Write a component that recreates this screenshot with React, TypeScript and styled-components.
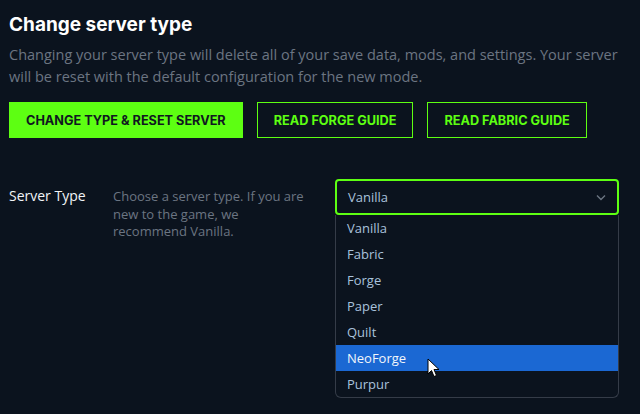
import React from 'react';
import styled, { createGlobalStyle, css } from 'styled-components';

const GlobalStyle = createGlobalStyle`
  html, body {
    margin: 0;
    padding: 0;
    background: #0b131e;
  }

  body {
    font-family: 'Open Sans', 'Liberation Sans', sans-serif;
    overflow: hidden;
  }
`;

const Page = styled.div`
  width: 640px;
  height: 414px;
  padding: 12px 9px 0;
  box-sizing: border-box;
  background: #0b131e;
`;

const Title = styled.h2`
  margin: 0;
  font-family: 'Inter', 'Liberation Sans', sans-serif;
  font-size: 19px;
  font-weight: 700;
  line-height: 26px;
  color: #ffffff;
`;

const Description = styled.p`
  margin: 6px 0 0;
  font-size: 14.5px;
  line-height: 22px;
  color: #6b7582;
`;

const Actions = styled.div`
  display: flex;
  gap: 14px;
  margin-top: 14px;
`;

const Button = styled.button<{ primary?: boolean }>`
  height: 36px;
  padding: 0 16px;
  font-family: 'Inter', 'Liberation Sans', sans-serif;
  font-size: 12.7px;
  font-weight: 700;
  text-transform: uppercase;
  border: 1px solid #5dff12;
  border-radius: 0;
  cursor: pointer;
  color: #5dff12;
  background: transparent;

  ${(props) =>
    props.primary &&
    css`
      color: #101820;
      background: #5dff12;
    `}
`;

const Field = styled.div`
  display: flex;
  align-items: flex-start;
  margin-top: 41px;
`;

const Label = styled.div`
  width: 104px;
  font-size: 14px;
  line-height: 18px;
  padding-top: 8px;
  color: #f1f4f7;
`;

const Hint = styled.div`
  width: 200px;
  font-size: 13px;
  line-height: 17.5px;
  padding-top: 9px;
  color: #6b7582;
`;

const SelectWrap = styled.div`
  position: relative;
  margin-left: 22px;
  width: 284px;
`;

const SelectBox = styled.div`
  display: flex;
  align-items: center;
  justify-content: space-between;
  height: 36px;
  padding: 0 10px 0 11px;
  box-sizing: border-box;
  border: 2px solid #5dff12;
  border-radius: 4px;
  font-size: 13px;
  color: #a9c2dc;
`;

const Chevron = styled.svg`
  width: 12px;
  height: 12px;
  color: #6b7582;
`;

const Menu = styled.ul`
  list-style: none;
  margin: 0;
  padding: 0;
  border: 1px solid #353c48;
  border-top: none;
  border-radius: 0 0 6px 6px;
  overflow: hidden;
`;

const Option = styled.li<{ active?: boolean }>`
  height: 26px;
  line-height: 26px;
  padding-left: 11px;
  font-size: 13px;
  color: #a9c2dc;

  ${(props) =>
    props.active &&
    css`
      color: #f2f6fb;
      background: #1b68d3;
    `}
`;

// mouse pointer hovering the highlighted option
const Cursor = styled.svg`
  position: absolute;
  left: 92px;
  top: 179px;
  width: 13px;
  height: 20px;
`;

const options = ['Vanilla', 'Fabric', 'Forge', 'Paper', 'Quilt', 'NeoForge', 'Purpur'];

export default function App() {
  return (
    <Page>
      <GlobalStyle />
      <Title>Change server type</Title>
      <Description>
        Changing your server type will delete all of your save data, mods, and settings. Your server
        will be reset with the default configuration for the new mode.
      </Description>

      <Actions>
        <Button primary>Change type &amp; reset server</Button>
        <Button>Read Forge guide</Button>
        <Button>Read Fabric guide</Button>
      </Actions>

      <Field>
        <Label>Server Type</Label>
        <Hint>Choose a server type. If you are new to the game, we recommend Vanilla.</Hint>
        <SelectWrap>
          <SelectBox>
            Vanilla
            <Chevron viewBox="0 0 12 12" fill="none" stroke="currentColor" strokeWidth="1.4">
              <path d="M2 4.5l4 4 4-4" />
            </Chevron>
          </SelectBox>
          <Menu>
            {options.map((name) => (
              <Option key={name} active={name === 'NeoForge'}>
                {name}
              </Option>
            ))}
          </Menu>
          <Cursor viewBox="0 0 13 20">
            <path
              d="M1 1 L1 16 L4.5 12.5 L7 18.5 L9.5 17.5 L7 11.5 L12 11.5 Z"
              fill="#ffffff"
              stroke="#000000"
              strokeWidth="1"
            />
          </Cursor>
        </SelectWrap>
      </Field>
    </Page>
  );
}
